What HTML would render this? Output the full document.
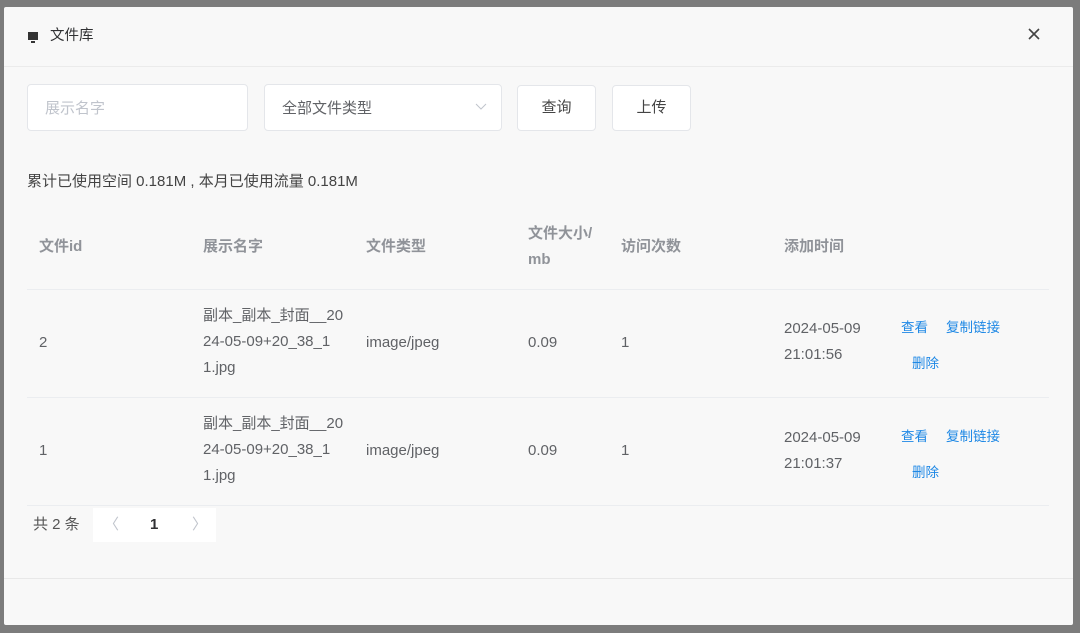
<!DOCTYPE html>
<html><head><meta charset="utf-8"><style>
*{box-sizing:border-box;margin:0;padding:0}
body{width:1080px;height:633px;background:#7c7c7c;font-family:"Liberation Sans","Noto Sans CJK SC",sans-serif;position:relative;overflow:hidden;color:#606266}
.dlg{position:absolute;left:4px;top:7px;width:1069px;height:618px;background:#f8f8f8;border-radius:2px}
.abs{position:absolute}
.box{position:absolute;background:#fff;border:1px solid #e4e6ea;border-radius:4px;font-size:15px}
.t{position:absolute;font-size:15px;line-height:26px}
.h{color:#909399;font-weight:bold}
.lnk{position:absolute;color:#1e88e5;font-size:13.5px}
.line{position:absolute;left:23px;width:1022px;height:1px;background:#ebedf0}
</style></head><body>
<div class="dlg">
<div class="abs" style="left:24px;top:25px;width:10px;height:8px;background:#333"></div>
<div class="abs" style="left:27px;top:34px;width:4px;height:2px;background:#333"></div>
<div class="t" style="left:46px;top:16px;color:#303133;font-size:14.5px">文件库</div>
<svg class="abs" style="left:1024px;top:21px" width="12" height="12"><path d="M1 1L11 11M11 1L1 11" stroke="#444" stroke-width="1.6"/></svg>
<div class="abs" style="left:0;top:59px;width:1069px;height:1px;background:#ebebeb"></div>
<div class="box" style="left:23px;top:77px;width:221px;height:47px;color:#c0c4cc;padding:12px 17px">展示名字</div>
<div class="box" style="left:260px;top:77px;width:238px;height:47px;color:#606266;padding:12px 17px">全部文件类型
<svg class="abs" style="left:210px;top:18px" width="12" height="8"><path d="M1 1L6 6L11 1" stroke="#c0c4cc" fill="none"/></svg></div>
<div class="box" style="left:513px;top:78px;width:79px;height:46px;text-align:center;line-height:44px;color:#444">查询</div>
<div class="box" style="left:608px;top:78px;width:79px;height:46px;text-align:center;line-height:44px;color:#444">上传</div>
<div class="t" style="left:23px;top:162px;color:#444">累计已使用空间 0.181M , 本月已使用流量 0.181M</div>
<div class="t h" style="left:35px;top:227px">文件id</div>
<div class="t h" style="left:199px;top:227px">展示名字</div>
<div class="t h" style="left:362px;top:227px">文件类型</div>
<div class="t h" style="left:524px;top:214px;width:80px">文件大小/<br>mb</div>
<div class="t h" style="left:617px;top:227px">访问次数</div>
<div class="t h" style="left:780px;top:227px">添加时间</div>
<div class="line" style="top:282px"></div>
<div class="t" style="left:35px;top:323px">2</div>
<div class="t" style="left:199px;top:296px;width:150px">副本_副本_封面__20<br>24-05-09+20_38_1<br>1.jpg</div>
<div class="t" style="left:362px;top:323px">image/jpeg</div>
<div class="t" style="left:524px;top:323px">0.09</div>
<div class="t" style="left:617px;top:323px">1</div>
<div class="t" style="left:780px;top:309px">2024-05-09<br>21:01:56</div>
<div class="lnk" style="left:897px;top:309px">查看</div>
<div class="lnk" style="left:942px;top:309px">复制链接</div>
<div class="lnk" style="left:908px;top:345px">删除</div>
<div class="line" style="top:390px"></div>
<div class="t" style="left:35px;top:431px">1</div>
<div class="t" style="left:199px;top:404px;width:150px">副本_副本_封面__20<br>24-05-09+20_38_1<br>1.jpg</div>
<div class="t" style="left:362px;top:431px">image/jpeg</div>
<div class="t" style="left:524px;top:431px">0.09</div>
<div class="t" style="left:617px;top:431px">1</div>
<div class="t" style="left:780px;top:418px">2024-05-09<br>21:01:37</div>
<div class="lnk" style="left:897px;top:418px">查看</div>
<div class="lnk" style="left:942px;top:418px">复制链接</div>
<div class="lnk" style="left:908px;top:454px">删除</div>
<div class="line" style="top:498px"></div>
<div class="t" style="left:29px;top:505px;color:#555">共 2 条</div>
<div class="abs" style="left:89px;top:501px;width:123px;height:34px;background:#fff"></div>
<div class="t" style="left:100px;top:505px;color:#c0c4cc">〈</div>
<div class="t" style="left:146px;top:505px;color:#303133;font-weight:bold">1</div>
<div class="t" style="left:188px;top:505px;color:#c0c4cc">〉</div>
<div class="abs" style="left:0;top:571px;width:1069px;height:1px;background:#e8e8e8"></div>
</div>
</body></html>
